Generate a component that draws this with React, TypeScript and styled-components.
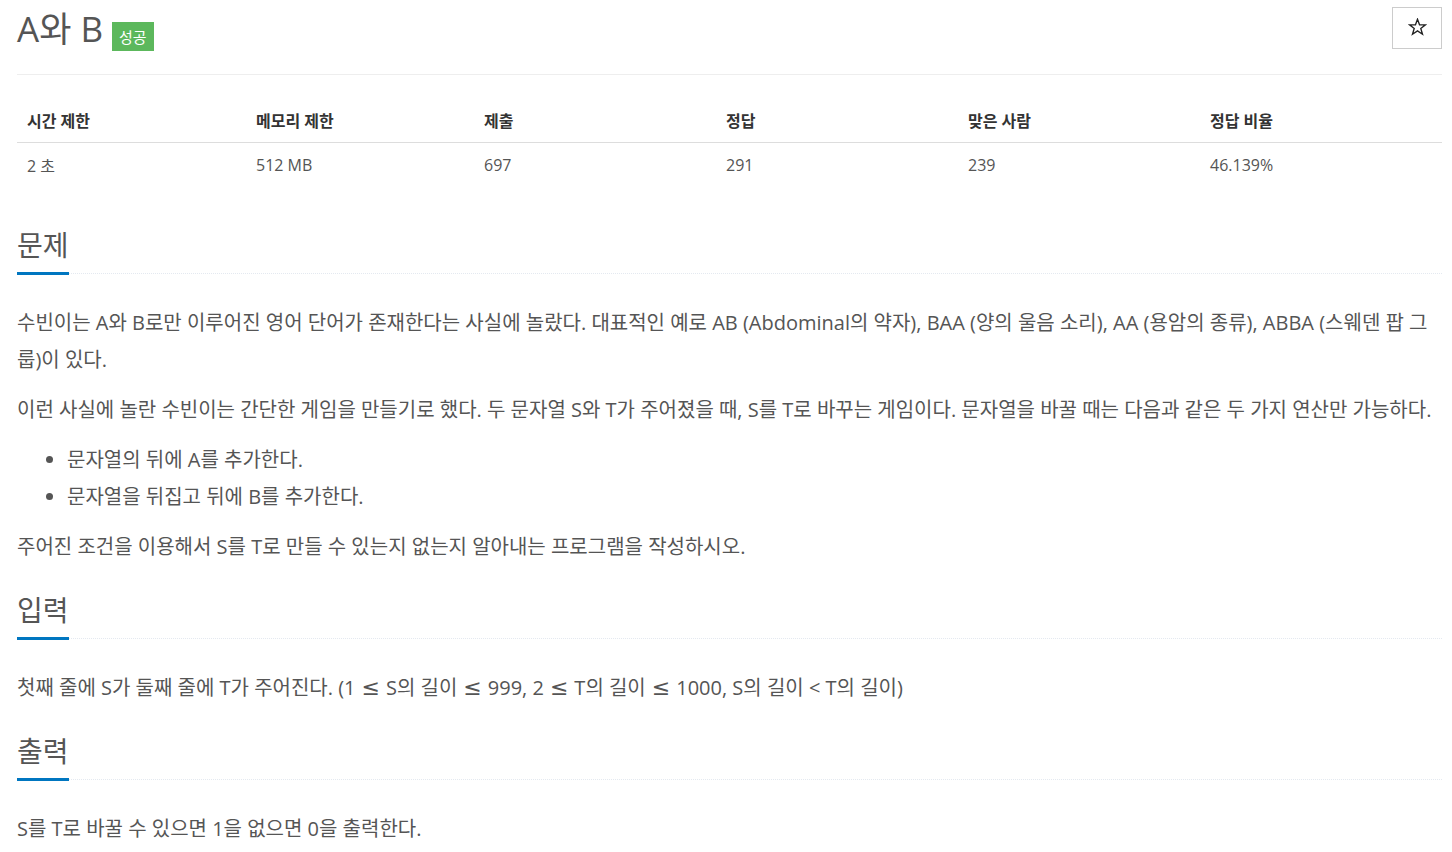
import React from 'react';
import styled, { createGlobalStyle } from 'styled-components';

const GlobalStyle = createGlobalStyle`
  html, body {
    margin: 0;
    padding: 0;
    background: #fff;
  }
  body {
    font-family: 'Open Sans', 'Noto Sans CJK KR', sans-serif;
    color: #555;
  }
`;

const Page = styled.div`
  padding: 0 10px 0 17px;
`;

const Header = styled.div`
  display: flex;
  justify-content: space-between;
  align-items: flex-start;
  box-sizing: border-box;
  height: 75px;
  padding-top: 7px;
  border-bottom: 1px solid #eee;
`;

const TitleRow = styled.div`
  display: flex;
  align-items: flex-start;
  gap: 9px;
`;

const Title = styled.h1`
  margin: 0;
  font-size: 35px;
  font-weight: 400;
  line-height: 44px;
  color: #555;
`;

const Badge = styled.span<{ tone?: string }>`
  display: inline-block;
  margin-top: 15px;
  padding: 0 7px;
  height: 29px;
  line-height: 31px;
  font-size: 15px;
  color: #fff;
  background: ${({ tone }) => tone ?? '#5cb85c'};
`;

const StarButton = styled.button`
  display: flex;
  align-items: center;
  justify-content: center;
  width: 50px;
  height: 42px;
  padding: 0 0 3px;
  background: #fff;
  border: 1px solid #ccc;
  border-radius: 0;
  cursor: pointer;
`;

const Table = styled.table`
  width: 100%;
  margin: 23px 0 26px;
  border-collapse: collapse;
  table-layout: fixed;
  font-size: 16px;
`;

const Th = styled.th`
  padding: 0 10px;
  height: 44px;
  text-align: left;
  font-weight: 700;
  color: #333;
  border-bottom: 1px solid #ddd;
`;

const Td = styled.td`
  padding: 0 10px;
  height: 44px;
  color: #555;
`;

const Section = styled.section`
  padding-top: 12px;
`;

const Headline = styled.div`
  display: flex;
  align-items: flex-end;
  margin-bottom: 30px;
  border-bottom: 1px dotted #e4e9f0;
`;

const HeadlineTitle = styled.h2`
  margin: 0 0 -2px;
  padding-bottom: 7px;
  font-size: 28px;
  font-weight: 400;
  line-height: 40px;
  color: #555;
  border-bottom: 3px solid #0076c0;
`;

const Text = styled.p`
  margin: 0 0 13px;
  font-size: 20px;
  line-height: 37px;
`;

const List = styled.ul`
  margin: 0 0 13px;
  padding-left: 50px;
  font-size: 20px;
  line-height: 37px;
`;

const Math = styled.span`
  margin: 0 6px;
  font-family: 'DejaVu Sans', sans-serif;
  font-size: 22px;
`;

const columns = [
  { label: '시간 제한', value: '2 초', width: 229 },
  { label: '메모리 제한', value: '512 MB', width: 228 },
  { label: '제출', value: '697', width: 242 },
  { label: '정답', value: '291', width: 242 },
  { label: '맞은 사람', value: '239', width: 242 },
  { label: '정답 비율', value: '46.139%', width: 242 },
];

const StarIcon = () => (
  <svg width="19" height="18" viewBox="0 0 24 23" fill="none">
    <polygon
      points="12,1.5 14.6,8.6 22.2,8.8 16.2,13.5 18.4,20.8 12,16.5 5.6,20.8 7.8,13.5 1.8,8.8 9.4,8.6"
      stroke="#222"
      strokeWidth="1.7"
      strokeLinejoin="miter"
    />
  </svg>
);

export default function App() {
  return (
    <Page>
      <GlobalStyle />
      <Header>
        <TitleRow>
          <Title>A와 B</Title>
          <Badge>성공</Badge>
        </TitleRow>
        <StarButton aria-label="즐겨찾기">
          <StarIcon />
        </StarButton>
      </Header>

      <Table>
        <colgroup>
          {columns.map((c) => (
            <col key={c.label} style={{ width: c.width }} />
          ))}
        </colgroup>
        <thead>
          <tr>
            {columns.map((c) => (
              <Th key={c.label}>{c.label}</Th>
            ))}
          </tr>
        </thead>
        <tbody>
          <tr>
            {columns.map((c) => (
              <Td key={c.label}>{c.value}</Td>
            ))}
          </tr>
        </tbody>
      </Table>

      <Section>
        <Headline>
          <HeadlineTitle>문제</HeadlineTitle>
        </Headline>
        <Text>
          수빈이는 A와 B로만 이루어진 영어 단어가 존재한다는 사실에 놀랐다. 대표적인 예로 AB (Abdominal의 약자), BAA (양의 울음 소리), AA (용암의 종류), ABBA (스웨덴 팝 그룹)이 있다.
        </Text>
        <Text>
          이런 사실에 놀란 수빈이는 간단한 게임을 만들기로 했다. 두 문자열 S와 T가 주어졌을 때, S를 T로 바꾸는 게임이다. 문자열을 바꿀 때는 다음과 같은 두 가지 연산만 가능하다.
        </Text>
        <List>
          <li>문자열의 뒤에 A를 추가한다.</li>
          <li>문자열을 뒤집고 뒤에 B를 추가한다.</li>
        </List>
        <Text>주어진 조건을 이용해서 S를 T로 만들 수 있는지 없는지 알아내는 프로그램을 작성하시오.</Text>
      </Section>

      <Section>
        <Headline>
          <HeadlineTitle>입력</HeadlineTitle>
        </Headline>
        <Text>
          첫째 줄에 S가 둘째 줄에 T가 주어진다. (1<Math>≤</Math>S의 길이<Math>≤</Math>999, 2<Math>≤</Math>T의 길이<Math>≤</Math>1000, S의 길이 &lt; T의 길이)
        </Text>
      </Section>

      <Section>
        <Headline>
          <HeadlineTitle>출력</HeadlineTitle>
        </Headline>
        <Text>S를 T로 바꿀 수 있으면 1을 없으면 0을 출력한다.</Text>
      </Section>
    </Page>
  );
}
